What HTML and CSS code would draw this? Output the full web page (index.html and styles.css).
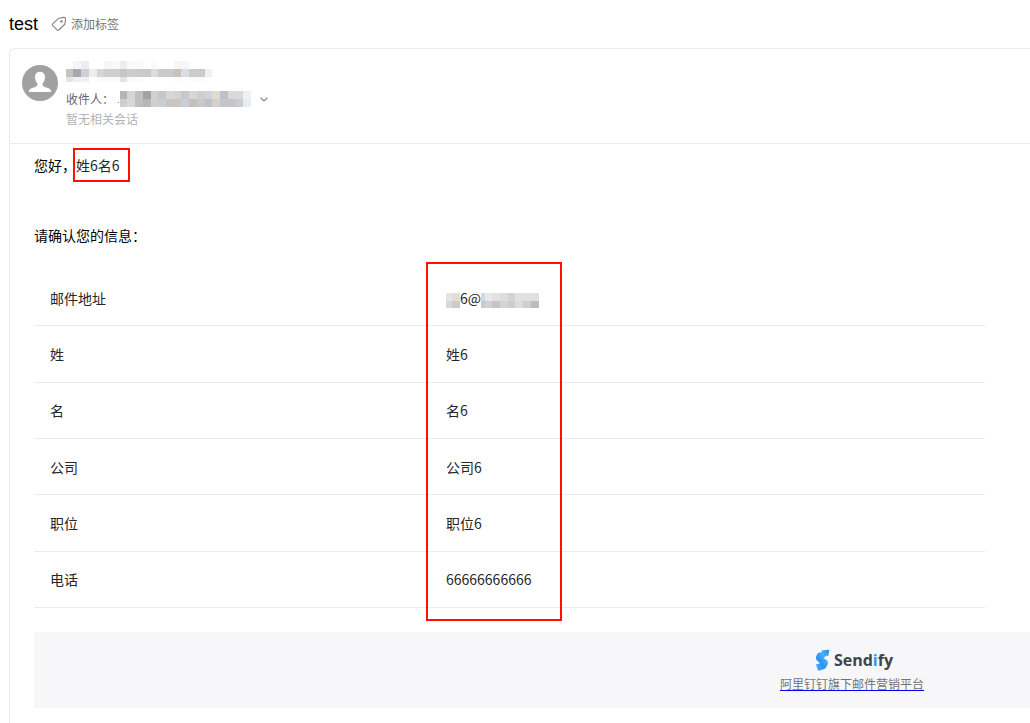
FILE: index.html
```html
<!DOCTYPE html>
<html lang="zh-CN">

<head>
    <meta charset="UTF-8">
    <title>test</title>
    <link rel="stylesheet" href="styles.css">
</head>

<body>
    <header class="subject">
        <h1>test</h1>
        <button type="button" class="tag-button">
            <svg width="16" height="16" viewBox="0 0 16 16" fill="none" stroke="#808080" stroke-width="1.1" stroke-linejoin="round">
                <path d="M8.2 2.2 L12.7 1.4 Q14.5 1.3 14.6 3 L14 7.6 Q13.9 8.1 13.5 8.5 L7.8 14 Q6.9 14.7 6 13.9 L1.5 9.4 Q.8 8.6 1.6 7.8 L7.3 2.7 Q7.7 2.3 8.2 2.2Z" />
                <circle cx="10.4" cy="5.4" r="1.2" fill="#808080" stroke="none" />
            </svg>
            添加标签
        </button>
    </header>

    <main class="mail">
        <section class="sender">
            <svg class="avatar" width="36" height="36" viewBox="0 0 36 36">
                <circle cx="18" cy="18" r="18" fill="#a0a1a3" />
                <path d="M18 6.8C21.2 6.8 23 9 23 12.2C23 15.2 21.6 17.2 20.6 18.5C20.2 20.5 21 21.3 23 22.1C26.5 23.4 29.3 24 29.3 27H6.7C6.7 24 9.5 23.4 13 22.1C15 21.3 15.8 20.5 15.4 18.5C14.4 17.2 13 15.2 13 12.2C13 9 14.8 6.8 18 6.8Z" fill="#fff" />
            </svg>
            <div class="sender-info">
                <svg class="mosaic" width="146" height="21" viewBox="0 0 146 21" shape-rendering="crispEdges">
                    <path fill="#f6f6f6" d="M7 0h8v8H7zM38 0h16v8H38zM108 0h15v8h-15z" />
                    <path fill="#ededed" d="M15 0h8v8h-8zM54 0h7v8h-7z" />
                    <path fill="#fafafb" d="M46 0h8v8h-8zM61 0h16v8H61zM85 0h7v8h-7zM31 16h23v5H31zM61 16h16v5H61zM108 16h7v5h-7zM123 16h16v5h-16z" />
                    <path fill="#e5e5e5" d="M0 16h7v5H0zM54 16h7v5h-7z" />
                    <path fill="#f0f0f1" d="M7 16h16v5H7z" />
                    <path fill="#c5c5bf" d="M0 8h7v8H0z" />
                    <path fill="#a8a6af" d="M7 8h8v8H7z" />
                    <path fill="#cdced6" d="M15 8h8v8h-8z" />
                    <path fill="#eeedec" d="M23 8h8v8h-8z" />
                    <path fill="#d5d5d5" d="M31 8h7v8h-7z" />
                    <path fill="#cecfce" d="M38 8h16v8H38z" />
                    <path fill="#c8c6c4" d="M54 8h7v8h-7z" />
                    <path fill="#c9cdd0" d="M61 8h8v8h-8z" />
                    <path fill="#c9cac9" d="M69 8h16v8H69zM92 8h16v8H92z" />
                    <path fill="#dddcda" d="M85 8h7v8h-7z" />
                    <path fill="#c8c2bf" d="M108 8h7v8h-7z" />
                    <path fill="#d5dee6" d="M115 8h8v8h-8z" />
                    <path fill="#cbcbca" d="M123 8h16v8h-16z" />
                    <path fill="#eff0f2" d="M139 8h7v8h-7z" />
                </svg>
                <div class="recipient">
                    <span>收件人：</span>
                    <svg class="mosaic" width="133" height="16" viewBox="0 0 133 16" shape-rendering="crispEdges">
                        <path fill="#b98450" d="M0 11h1v1H0z" />
                        <path fill="#b3b6b5" d="M2 0h7v8H2z" />
                        <path fill="#d3d5d6" d="M9 0h8v8H9z" />
                        <path fill="#c3bfc0" d="M17 0h8v16h-8z" />
                        <path fill="#a2a0a6" d="M25 0h8v8h-8z" />
                        <path fill="#cfd1d1" d="M33 0h7v16h-7z" />
                        <path fill="#c2c6cf" d="M40 0h8v8h-8z" />
                        <path fill="#d7d7d9" d="M48 0h8v8h-8z" />
                        <path fill="#d6d2cf" d="M56 0h7v8h-7z" />
                        <path fill="#c3c8d2" d="M63 0h8v8h-8z" />
                        <path fill="#d7d7d7" d="M71 0h8v8h-8z" />
                        <path fill="#d0cecb" d="M79 0h8v8h-8z" />
                        <path fill="#cfd3de" d="M87 0h7v8h-7z" />
                        <path fill="#dfdbd5" d="M94 0h8v8h-8z" />
                        <path fill="#bec1c7" d="M102 0h8v8h-8z" />
                        <path fill="#d9d9db" d="M110 0h15v8h-15z" />
                        <path fill="#eff0f2" d="M125 0h8v8h-8z" />
                        <path fill="#cdd0d0" d="M2 8h7v8H2z" />
                        <path fill="#d8dad9" d="M9 8h8v8H9z" />
                        <path fill="#b9b6b7" d="M25 8h8v8h-8z" />
                        <path fill="#c7ced6" d="M40 8h8v8h-8z" />
                        <path fill="#c9c5c0" d="M48 8h15v8H48z" />
                        <path fill="#c8cdd6" d="M63 8h8v8h-8z" />
                        <path fill="#c4bfb8" d="M71 8h8v8h-8z" />
                        <path fill="#c9c9c7" d="M79 8h8v8h-8z" />
                        <path fill="#bfc1c5" d="M87 8h7v8h-7z" />
                        <path fill="#d4d0cd" d="M94 8h8v8h-8z" />
                        <path fill="#c4c6c9" d="M102 8h16v8h-16z" />
                        <path fill="#cdcdcf" d="M118 8h7v8h-7z" />
                        <path fill="#e8edf1" d="M125 8h8v8h-8z" />
                    </svg>
                    <button type="button" class="expand-button" aria-label="展开">
                        <svg width="8" height="5" viewBox="0 0 8 5" fill="none" stroke="#858585" stroke-width="1.2">
                            <path d="M.6 .7L4 4L7.4 .7" />
                        </svg>
                    </button>
                </div>
                <p class="no-session">暂无相关会话</p>
            </div>
        </section>

        <section class="content">
            <p class="greeting">您好，<span class="name">姓6名6</span></p>
            <p class="confirm">请确认您的信息：</p>

            <table class="info">
                <colgroup>
                    <col class="col-label">
                    <col>
                </colgroup>
                <tbody>
                    <tr>
                        <th scope="row">邮件地址</th>
                        <td>
                            <div class="email">
                                <svg class="mosaic" width="14" height="15" viewBox="0 0 14 15" shape-rendering="crispEdges">
                                    <path fill="#e5e5e4" d="M0 0h6v8H0z" />
                                    <path fill="#dededf" d="M6 0h8v8H6z" />
                                    <path fill="#d8d8d7" d="M0 8h6v7H0z" />
                                    <path fill="#cbcbcd" d="M6 8h8v7H6z" />
                                </svg>
                                <span>6@</span>
                                <svg class="mosaic" width="58" height="15" viewBox="0 0 58 15" shape-rendering="crispEdges">
                                    <path fill="#d5d7da" d="M0 0h4v8H0z" />
                                    <path fill="#e5e9eb" d="M4 0h7v8H4z" />
                                    <path fill="#e2e2e1" d="M11 0h8v8h-8z" />
                                    <path fill="#dcdddf" d="M19 0h8v8h-8z" />
                                    <path fill="#d2d3d7" d="M27 0h7v8h-7z" />
                                    <path fill="#e0e0e0" d="M34 0h24v8H34z" />
                                    <path fill="#c9c9cc" d="M0 8h4v7H0z" />
                                    <path fill="#d1d1d2" d="M4 8h7v7H4z" />
                                    <path fill="#c5c5c5" d="M11 8h8v7h-8z" />
                                    <path fill="#d3d3d5" d="M19 8h8v7h-8z" />
                                    <path fill="#cbccd0" d="M27 8h7v7h-7z" />
                                    <path fill="#dcdcda" d="M34 8h8v7h-8z" />
                                    <path fill="#cececf" d="M42 8h8v7h-8z" />
                                    <path fill="#bdbdbd" d="M50 8h8v7h-8z" />
                                </svg>
                            </div>
                        </td>
                    </tr>
                    <tr>
                        <th scope="row">姓</th>
                        <td>姓6</td>
                    </tr>
                    <tr>
                        <th scope="row">名</th>
                        <td>名6</td>
                    </tr>
                    <tr>
                        <th scope="row">公司</th>
                        <td>公司6</td>
                    </tr>
                    <tr>
                        <th scope="row">职位</th>
                        <td>职位6</td>
                    </tr>
                    <tr>
                        <th scope="row">电话</th>
                        <td>66666666666</td>
                    </tr>
                </tbody>
            </table>

            <footer class="footer">
                <div class="brand">
                    <div class="logo">
                        <svg width="15" height="22" viewBox="0 0 15 22">
                            <defs>
                                <linearGradient id="brand-blue" x1="1" y1="0" x2="0" y2="1">
                                    <stop offset="0" stop-color="#2b86e0" />
                                    <stop offset=".35" stop-color="#45b4f8" />
                                    <stop offset=".6" stop-color="#2e93f2" />
                                    <stop offset="1" stop-color="#4fb0fb" />
                                </linearGradient>
                            </defs>
                            <path fill="url(#brand-blue)" d="M6 1.6L14.4 .8L13.2 7.2L11.6 6.6L8.6 9L12.2 11.4Q13.8 13 12.8 15.2L11.2 18.2Q10 20 8 20.6L4 21.8Q2.6 21.4 2.2 19.2L1 15.6L5 14.2L1.8 11.4Q.4 10 1 8L2 5.4Q2.8 3.7 4.6 3.5L7.4 3Z" />
                        </svg>
                        <span>Send<i>i</i>fy</span>
                    </div>
                    <a href="#">阿里钉钉旗下邮件营销平台</a>
                </div>
            </footer>
        </section>
    </main>
</body>

</html>
```

FILE: styles.css
```css
body {
    font-family: "Noto Sans CJK SC", sans-serif;
    font-size: 14px;
    line-height: 20px;
    color: #000;
    background-color: #fff;
    margin: 0;
}

h1,
p {
    margin: 0;
    font-weight: normal;
}

svg {
    display: block;
    flex: none;
}

button {
    padding: 0;
    border: none;
    background: none;
    font-family: inherit;
    line-height: inherit;
    cursor: pointer;
}

.subject {
    display: flex;
    align-items: center;
    gap: 13px;
    height: 48px;
    padding-left: 9px;
}

.subject h1 {
    font-family: "Liberation Sans", sans-serif;
    font-size: 18px;
}

.tag-button {
    display: flex;
    align-items: center;
    gap: 4px;
    font-size: 12px;
    color: #737373;
}

.mail {
    margin-left: 9px;
    border: 1px solid #ebebeb;
    border-width: 1px 0 0 1px;
    border-top-left-radius: 6px;
}

.sender {
    display: flex;
    gap: 8px;
    padding: 12px 12px 14px;
    border-bottom: 1px solid #ebebeb;
}

.avatar {
    margin-top: 4px;
}

.sender-info {
    font-size: 12px;
    color: #666;
}

.recipient {
    display: flex;
    align-items: center;
    height: 20px;
    margin-top: 7px;
}

.recipient span {
    margin-right: 4px;
}

.expand-button {
    margin-left: 9px;
}

.no-session {
    color: #b3b3b3;
}

.content {
    padding: 11px 0 16px 24px;
}

.name {
    position: relative;
    color: #262626;
}

/* red frame round the filled-in name */
.name::after {
    content: "";
    position: absolute;
    inset: -7px -10px -7px -3px;
    border: 2px solid #ff1000;
}

.confirm {
    margin-top: 50px;
}

.info {
    position: relative;
    width: calc(100% - 45px);
    height: 338px;
    margin-top: 25px;
    table-layout: fixed;
    border-collapse: separate;
    border-spacing: 0;
    color: #262626;
}

.col-label {
    width: 396px;
}

/* red frame round the value column */
.info::after {
    content: "";
    position: absolute;
    top: -8px;
    bottom: -13px;
    left: 392px;
    width: 132px;
    border: 2px solid #ff1000;
}

.info th,
.info td {
    padding: 0 16px;
    border-bottom: 1px solid #ebebeb;
    font-weight: normal;
    text-align: left;
}

.email {
    display: flex;
    align-items: flex-end;
}

.footer {
    display: flex;
    justify-content: flex-end;
    margin-top: 24px;
    padding: 16px 106px 14px 0;
    background-color: #f7f7fa;
}

.brand {
    display: flex;
    flex-direction: column;
    align-items: center;
}

.logo {
    display: flex;
    align-items: center;
    gap: 4px;
    height: 24px;
    margin-bottom: 2px;
    padding-left: 4px;
    font-family: "Open Sans", sans-serif;
    font-size: 16px;
    font-weight: bold;
    color: #3f444d;
}

.logo i {
    font-style: normal;
    color: #2b9af3;
}

.brand a {
    font-size: 12px;
    color: #737373;
    text-decoration: underline #0000ee;
    text-decoration-skip-ink: none;
}
```
